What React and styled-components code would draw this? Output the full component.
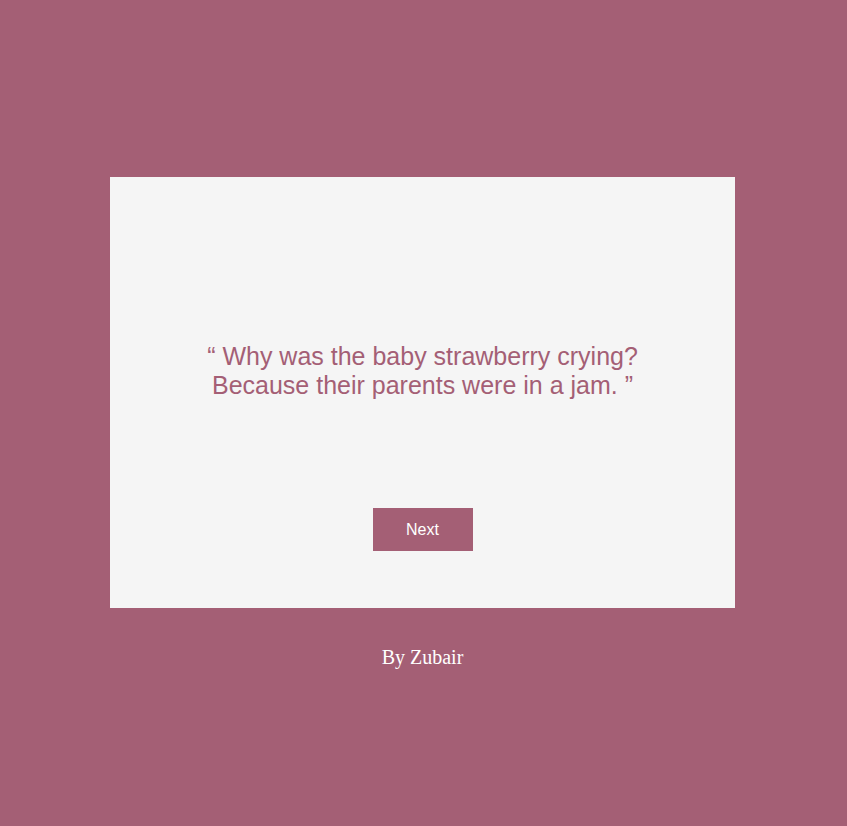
import React from "react";
import styled, { createGlobalStyle } from "styled-components";

const Global = createGlobalStyle`
  html, body { margin: 0; padding: 0; }
  body { background: #a45f75; }
`;

const Page = styled.div`
  min-height: 826px;
  display: flex;
  flex-direction: column;
  align-items: center;
  padding-top: 177px;
  box-sizing: border-box;
  padding-right: 2px;
`;

const Card = styled.div`
  width: 625px;
  height: 431px;
  background: #f5f5f5;
  display: flex;
  flex-direction: column;
  align-items: center;
  box-sizing: border-box;
  padding-top: 165px;
`;

const Quote = styled.p`
  margin: 0;
  font-family: "Liberation Sans", Arial, sans-serif;
  font-size: 25px;
  line-height: 29px;
  color: #a45f75;
  text-align: center;
`;

const NextButton = styled.button`
  margin-top: 108px;
  width: 100px;
  height: 43px;
  border: none;
  background: #a45f75;
  color: #ffffff;
  font-family: "Liberation Sans", Arial, sans-serif;
  font-size: 16px;
  cursor: pointer;
`;

const Footer = styled.p`
  margin: 38px 0 0;
  font-family: "Liberation Serif", "Times New Roman", serif;
  font-size: 20px;
  color: #ffffff;
`;

export default function App() {
  return (
    <>
      <Global />
      <Page>
        <Card>
          <Quote>
            “ Why was the baby strawberry crying?
            <br />
            Because their parents were in a jam. ”
          </Quote>
          <NextButton>Next</NextButton>
        </Card>
        <Footer>By Zubair</Footer>
      </Page>
    </>
  );
}
